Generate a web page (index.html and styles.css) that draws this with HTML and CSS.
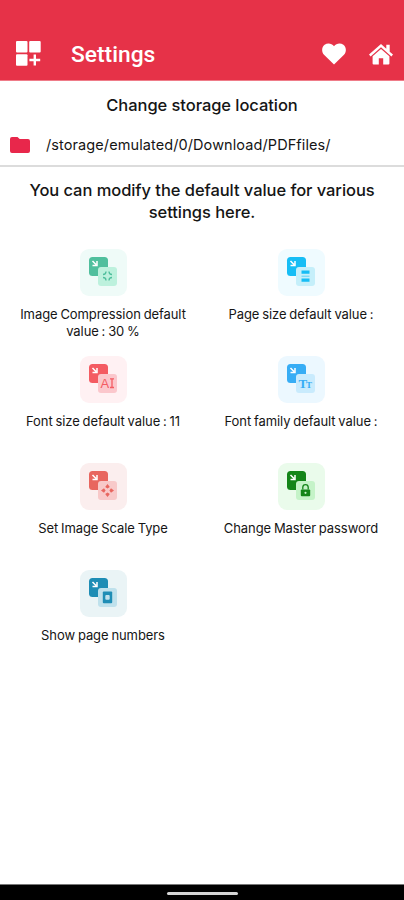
FILE: index.html
```
<!DOCTYPE html>
<html lang="en">
  <head>
    <meta charset="UTF-8" />
    <meta name="viewport" content="width=device-width, initial-scale=1.0" />
    <title>Settings</title>
    <link rel="stylesheet" href="styles.css">
  </head>
  <body>
    <header class="toolbar">
      <svg class="icon-grid" width="26" height="26" viewBox="0 0 26 26" fill="#fff">
        <rect x="0" y="0" width="11.5" height="11.5" rx="1" />
        <rect x="13.2" y="0" width="11.5" height="11.5" rx="1" />
        <rect x="0" y="13.2" width="11.5" height="11.5" rx="1" />
        <path d="M17.6 13.6h2.4v4.2h4.2v2.4H20v4.2h-2.4v-4.2h-4.2v-2.4h4.2z" />
      </svg>
      <h1>Settings</h1>
      <svg class="icon-heart" width="24" height="22" viewBox="0 0 24 22" fill="#fff">
        <path d="M12 21.5L2 11.8C-.8 8.8-.3 4 2.6 1.8 5.5-.4 9.6.1 12 3.2 14.4.1 18.5-.4 21.4 1.8 24.3 4 24.8 8.8 22 11.8z" />
      </svg>
      <svg class="icon-home" width="24" height="21" viewBox="0 0 24 21" fill="#fff">
        <path d="M12 0L0 10.6l1.6 1.8L12 3.3l10.4 9.1 1.6-1.8-3.3-2.9V.8h-3.4v3.9z" />
        <path d="M12 5L3.6 12.3V19.5q0 1 1 1H9.8V14.3h4.4V20.5h5.2q1 0 1-1V12.3z" />
      </svg>
    </header>

    <main>
      <section class="storage">
        <h2>Change storage location</h2>
        <div class="path">
          <svg width="20" height="16" viewBox="0 0 20 16" fill="#e8274b">
            <path d="M2 0h5.5l2.2 2H18q2 0 2 2v10q0 2-2 2H2q-2 0-2-2V2q0-2 2-2z" />
          </svg>
          <span>/storage/emulated/0/Download/PDFfiles/</span>
        </div>
      </section>

      <h2 class="intro">You can modify the default value for various<br>settings here.</h2>

      <div class="grid">
        <div class="item">
          <svg class="tile compress" viewBox="0 0 47 47">
            <rect class="back" x="9" y="8" width="19" height="19" rx="3.5" />
            <path class="arrow" d="M12.5 12l3.5 3.5M17 12v4.5h-4.5" />
            <rect class="front" x="18" y="18" width="19" height="19" rx="3" />
            <path class="line" d="M26 22.5q0 3-3 3M29 22.5q0 3 3 3M26 31.500q0-3-3-3M29 31.500q0-3 3-3" />
          </svg>
          <p>Image Compression default<br>value : 30 %</p>
        </div>
        <div class="item">
          <svg class="tile page-size" viewBox="0 0 47 47">
            <rect class="back" x="9" y="8" width="19" height="19" rx="3.5" />
            <path class="arrow" d="M12.5 12l3.5 3.5M17 12v4.5h-4.5" />
            <rect class="front" x="18" y="18" width="19" height="19" rx="3" />
            <path class="fill" d="M23.5 21.5h8v3.3h-8zM23.5 29.5h8v3.3h-8z" />
            <path class="thin" d="M23.5 27.2h8" />
          </svg>
          <p>Page size default value :</p>
        </div>
        <div class="item">
          <svg class="tile font-size" viewBox="0 0 47 47">
            <rect class="back" x="9" y="8" width="19" height="19" rx="3.5" />
            <path class="arrow" d="M12.5 12l3.5 3.5M17 12v4.5h-4.5" />
            <rect class="front" x="18" y="18" width="19" height="19" rx="3" />
            <text x="20.5" y="32">A</text>
            <path class="line" d="M30 22.800h4M32 23v8.500M30 31.500h4" />
          </svg>
          <p>Font size default value : 11</p>
        </div>
        <div class="item">
          <svg class="tile font-family" viewBox="0 0 47 47">
            <rect class="back" x="9" y="8" width="19" height="19" rx="3.5" />
            <path class="arrow" d="M12.5 12l3.5 3.5M17 12v4.5h-4.5" />
            <rect class="front" x="18" y="18" width="19" height="19" rx="3" />
            <text x="20.5" y="31.5">T</text>
            <text class="small" x="28" y="31.5">T</text>
          </svg>
          <p>Font family default value :</p>
        </div>
        <div class="item">
          <svg class="tile scale" viewBox="0 0 47 47">
            <rect class="back" x="9" y="8" width="19" height="19" rx="3.5" />
            <path class="arrow" d="M12.5 12l3.5 3.5M17 12v4.5h-4.5" />
            <rect class="front" x="18" y="18" width="19" height="19" rx="3" />
            <path class="fill" d="M27.5 21l2.3 3-2.3 1.600-2.300-1.600zM27.500 34l2.300-3-2.300-1.600-2.300 1.600zM21 27.500l3-2.300 1.600 2.300-1.600 2.300zM34 27.500l-3-2.300-1.600 2.300 1.600 2.300z" />
          </svg>
          <p>Set Image Scale Type</p>
        </div>
        <div class="item">
          <svg class="tile password" viewBox="0 0 47 47">
            <rect class="back" x="9" y="8" width="19" height="19" rx="3.5" />
            <path class="arrow" d="M12.5 12l3.5 3.5M17 12v4.5h-4.5" />
            <rect class="front" x="18" y="18" width="19" height="19" rx="3" />
            <rect class="fill" x="22.8" y="26.5" width="9.4" height="6.8" rx="1" />
            <path class="line" d="M24.8 26.5v-2.2a2.7 2.7 0 0 1 5.4 0v2.2" />
            <circle class="hole" cx="27.5" cy="29.8" r="1.1" />
          </svg>
          <p>Change Master password</p>
        </div>
        <div class="item">
          <svg class="tile numbers" viewBox="0 0 47 47">
            <rect class="back" x="9" y="8" width="19" height="19" rx="3.5" />
            <path class="arrow" d="M12.5 12l3.5 3.5M17 12v4.5h-4.5" />
            <rect class="front" x="18" y="18" width="19" height="19" rx="3" />
            <rect class="fill" x="22.8" y="21.5" width="9.4" height="11.8" rx="1" />
            <rect class="hole" x="25.3" y="25" width="4.4" height="4.8" rx="1" />
          </svg>
          <p>Show page numbers</p>
        </div>
      </div>
    </main>

    <footer class="navbar">
      <div class="handle"></div>
    </footer>
  </body>
</html>
```
FILE: styles.css
```
* {
  box-sizing: border-box;
}
body {
  font-family: Inter, "Liberation Sans", sans-serif;
  background-color: #fff;
  color: #151515;
  display: flex;
  flex-direction: column;
  height: 100vh;
  margin: 0;
}
h1,
h2,
p {
  margin: 0;
}
.toolbar {
  display: flex;
  align-items: center;
  height: 81px;
  padding: 28px 11px 0 16px;
  background-color: #e63248;
  border-bottom: 1px solid #ef7c89;
}
.toolbar h1 {
  flex: 1;
  margin-left: 29px;
  color: #fff;
  font-family: Roboto, sans-serif;
  font-size: 22.8px;
  font-weight: 500;
}
.icon-home {
  margin-left: 23px;
}
main {
  flex: 1;
}
h2 {
  font-size: 16.5px;
  font-weight: 500;
  line-height: 22px;
  letter-spacing: -0.06px;
  text-align: center;
}
.storage {
  height: 86px;
  padding-top: 13px;
  border-bottom: 2px solid #dcdcdc;
}
.path {
  display: flex;
  align-items: center;
  gap: 16px;
  margin-top: 19px;
  padding-left: 10px;
  font-size: 14.5px;
  letter-spacing: 0.09px;
  line-height: 20px;
}
.intro {
  margin-top: 12px;
}
.grid {
  display: grid;
  grid-template-columns: 198px 198px;
  grid-auto-rows: 107px;
  justify-content: center;
  margin-top: 26px;
}
.item {
  display: flex;
  flex-direction: column;
  align-items: center;
}
.item p {
  margin-top: 10px;
  font-size: 13px;
  letter-spacing: -0.08px;
  line-height: 17px;
  text-align: center;
  white-space: nowrap;
  word-spacing: -0.7px;
}
.tile {
  width: 47px;
  height: 47px;
  border-radius: 9px;
}
.tile .arrow {
  fill: none;
  stroke: #fff;
  stroke-width: 1.5;
}
.tile .back,
.tile .fill {
  fill: var(--main);
}
.tile .front,
.tile .hole {
  fill: var(--light);
}
.tile .line,
.tile .thin {
  fill: none;
  stroke: var(--main);
  stroke-width: 1.3;
}
.tile .thin {
  stroke-width: 0.6;
}
.tile text {
  fill: var(--main);
  font-family: "Liberation Serif", serif;
  font-size: 13px;
  font-weight: bold;
}
.tile.font-size text {
  font-family: "Liberation Sans", sans-serif;
  font-weight: normal;
}
.tile .small {
  font-size: 9px;
}
.compress {
  --main: #50bf9d;
  --light: #bdf1dd;
  background-color: #effbf8;
}
.page-size {
  --main: #16bdf5;
  --light: #c5effa;
  background-color: #effbff;
}
.font-size {
  --main: #f45b62;
  --light: #fbc7cc;
  background-color: #fff1f3;
}
.font-family {
  --main: #37adf5;
  --light: #c9ebfd;
  background-color: #ecf8ff;
}
.scale {
  --main: #e8665f;
  --light: #f8c9c9;
  background-color: #fbeeee;
}
.password {
  --main: #148519;
  --light: #c5f3c8;
  background-color: #eafbeb;
}
.numbers {
  --main: #1e8db5;
  --light: #bfe1ec;
  background-color: #eaf4f6;
}
.navbar {
  display: flex;
  justify-content: center;
  height: 16px;
  padding-top: 7px;
  background-color: #000;
  border-top: 1px solid #777;
}
.handle {
  width: 71px;
  height: 3px;
  border-radius: 2px;
  background-color: #d5d5d5;
}
```
